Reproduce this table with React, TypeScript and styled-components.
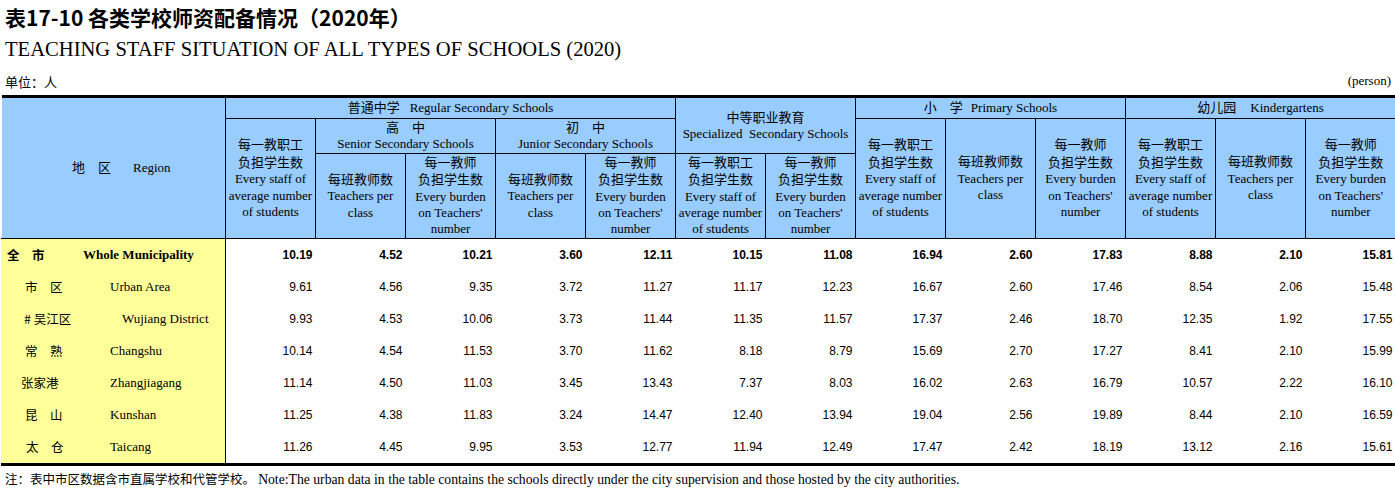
import React from 'react'
import styled, { createGlobalStyle } from 'styled-components'

const GlobalStyle = createGlobalStyle`
  body {
    margin: 0;
    background: #fff;
    color: #000;
  }
`

const CN = `"Noto Sans CJK SC", "Liberation Sans", sans-serif`
const SERIF = `"Liberation Serif", "Noto Sans CJK SC", serif`
const SANS = `"Liberation Sans", Arial, sans-serif`

const Page = styled.div`
  width: 1395px;
  padding-top: 3px;
`

const TitleCn = styled.h1`
  margin: 0 0 0 5px;
  height: 28px;
  line-height: 28px;
  font-family: "Noto Sans CJK SC", sans-serif;
  font-size: 21px;
  font-weight: 700;
`

const TitleEn = styled.h2`
  margin: 0 0 0 5px;
  height: 36px;
  line-height: 36px;
  font-family: ${SERIF};
  font-size: 20.6px;
  font-weight: 400;
`

const UnitRow = styled.div`
  display: flex;
  justify-content: space-between;
  align-items: center;
  height: 28px;
  padding: 0 4px 0 5px;
  font-size: 13px;
`

const Unit = styled.span`
  font-family: ${CN};
`

const Person = styled.span`
  font-family: ${SERIF};
`

const Table = styled.table`
  margin-left: 1px;
  border-collapse: collapse;
  table-layout: fixed;
  width: 1394px;
  border-top: 3px solid #000;
  border-bottom: 3px solid #000;
`

const HeadCell = styled.th<{ $h?: number; $pl?: number }>`
  background: #99ccff;
  border: 1px solid #000;
  border-top: none;
  padding: 0 0 0 ${(p) => p.$pl ?? 0}px;
  height: ${(p) => (p.$h ? `${p.$h}px` : 'auto')};
  font-weight: 400;
  font-size: 13px;
  line-height: 16.4px;
  text-align: center;
  vertical-align: middle;
  white-space: nowrap;
`

const Cn = styled.span`
  font-family: ${CN};
`

const En = styled.span`
  font-family: ${SERIF};
`

const Gap = styled.span<{ $w: number }>`
  display: inline-block;
  width: ${(p) => p.$w}px;
`

const RegionCell = styled.td<{ $bold?: boolean }>`
  background: #ffff99;
  border-right: 1px solid #000;
  border-left: 1px solid #ffff99;
  height: 32px;
  padding: 0;
  font-size: 13px;
  font-weight: ${(p) => (p.$bold ? 700 : 400)};
  white-space: nowrap;
`

const RegionInner = styled.div<{ $en: number }>`
  display: grid;
  grid-template-columns: ${(p) => p.$en}px 1fr;
  align-items: center;
`

const RegionCn = styled.span<{ $x: number }>`
  padding-left: ${(p) => p.$x}px;
  font-family: ${CN};
  font-size: 12.5px;
`

const RegionEn = styled.span`
  font-family: ${SERIF};
`

const NumCell = styled.td<{ $bold?: boolean }>`
  padding: 0 3px 0 0;
  text-align: right;
  font-family: ${SANS};
  font-size: 12px;
  font-weight: ${(p) => (p.$bold ? 700 : 400)};
`

const Note = styled.p`
  margin: 2px 0 0 5px;
  height: 22px;
  line-height: 22px;
  font-size: 12.5px;
`

const NoteEn = styled.span`
  font-family: ${SERIF};
  font-size: 13.7px;
`

type Row = {
  cn: string
  en: string
  cnX: number
  enX: number
  bold?: boolean
  values: string[]
}

const rows: Row[] = [
  { cn: '全　市', en: 'Whole Municipality', cnX: 5, enX: 81, bold: true,
    values: ['10.19', '4.52', '10.21', '3.60', '12.11', '10.15', '11.08', '16.94', '2.60', '17.83', '8.88', '2.10', '15.81'] },
  { cn: '市　区', en: 'Urban Area', cnX: 23, enX: 108,
    values: ['9.61', '4.56', '9.35', '3.72', '11.27', '11.17', '12.23', '16.67', '2.60', '17.46', '8.54', '2.06', '15.48'] },
  { cn: '# 吴江区', en: 'Wujiang District', cnX: 22, enX: 120,
    values: ['9.93', '4.53', '10.06', '3.73', '11.44', '11.35', '11.57', '17.37', '2.46', '18.70', '12.35', '1.92', '17.55'] },
  { cn: '常　熟', en: 'Changshu', cnX: 23, enX: 108,
    values: ['10.14', '4.54', '11.53', '3.70', '11.62', '8.18', '8.79', '15.69', '2.70', '17.27', '8.41', '2.10', '15.99'] },
  { cn: '张家港', en: 'Zhangjiagang', cnX: 19, enX: 108,
    values: ['11.14', '4.50', '11.03', '3.45', '13.43', '7.37', '8.03', '16.02', '2.63', '16.79', '10.57', '2.22', '16.10'] },
  { cn: '昆　山', en: 'Kunshan', cnX: 23, enX: 108,
    values: ['11.25', '4.38', '11.83', '3.24', '14.47', '12.40', '13.94', '19.04', '2.56', '19.89', '8.44', '2.10', '16.59'] },
  { cn: '太　仓', en: 'Taicang', cnX: 24, enX: 108,
    values: ['11.26', '4.45', '9.95', '3.53', '12.77', '11.94', '12.49', '17.47', '2.42', '18.19', '13.12', '2.16', '15.61'] },
]

const StaffLabel = () => (
  <>
    <Cn>每一教职工</Cn>
    <br />
    <Cn>负担学生数</Cn>
    <br />
    <En>Every staff of</En>
    <br />
    <En>average number</En>
    <br />
    <En>of students</En>
  </>
)

const ClassLabel = () => (
  <>
    <Cn>每班教师数</Cn>
    <br />
    <En>Teachers per</En>
    <br />
    <En>class</En>
  </>
)

const BurdenLabel = () => (
  <>
    <Cn>每一教师</Cn>
    <br />
    <Cn>负担学生数</Cn>
    <br />
    <En>Every burden</En>
    <br />
    <En>on Teachers'</En>
    <br />
    <En>number</En>
  </>
)

const App: React.FC = () => {
  return (
    <Page>
      <GlobalStyle />
      <TitleCn>表17-10 各类学校师资配备情况（2020年）</TitleCn>
      <TitleEn>TEACHING STAFF SITUATION OF ALL TYPES OF SCHOOLS (2020)</TitleEn>
      <UnitRow>
        <Unit>单位：人</Unit>
        <Person>(person)</Person>
      </UnitRow>
      <Table>
        <colgroup>
          <col style={{ width: 224 }} />
          {Array.from({ length: 13 }).map((_, i) => (
            <col key={i} style={{ width: 90 }} />
          ))}
        </colgroup>
        <thead>
          <tr>
            <HeadCell rowSpan={3} $pl={16} style={{ borderLeft: 'none' }}>
              <Cn>地　区</Cn>
              <Gap $w={22} />
              <En>Region</En>
            </HeadCell>
            <HeadCell colSpan={5} $h={20}>
              <Cn>普通中学</Cn>
              <Gap $w={10} />
              <En>Regular Secondary Schools</En>
            </HeadCell>
            <HeadCell colSpan={2} rowSpan={2}>
              <Cn>中等职业教育</Cn>
              <br />
              <En>Specialized&nbsp; Secondary Schools</En>
            </HeadCell>
            <HeadCell colSpan={3}>
              <Cn>小　学</Cn>
              <Gap $w={8} />
              <En>Primary Schools</En>
            </HeadCell>
            <HeadCell colSpan={3}>
              <Cn>幼儿园</Cn>
              <Gap $w={14} />
              <En>Kindergartens</En>
            </HeadCell>
          </tr>
          <tr>
            <HeadCell rowSpan={2}>
              <StaffLabel />
            </HeadCell>
            <HeadCell colSpan={2} $h={33}>
              <Cn>高　中</Cn>
              <br />
              <En>Senior Secondary Schools</En>
            </HeadCell>
            <HeadCell colSpan={2}>
              <Cn>初　中</Cn>
              <br />
              <En>Junior Secondary Schools</En>
            </HeadCell>
            <HeadCell rowSpan={2}>
              <StaffLabel />
            </HeadCell>
            <HeadCell rowSpan={2}>
              <ClassLabel />
            </HeadCell>
            <HeadCell rowSpan={2}>
              <BurdenLabel />
            </HeadCell>
            <HeadCell rowSpan={2}>
              <StaffLabel />
            </HeadCell>
            <HeadCell rowSpan={2}>
              <ClassLabel />
            </HeadCell>
            <HeadCell rowSpan={2} style={{ borderRight: 'none' }}>
              <BurdenLabel />
            </HeadCell>
          </tr>
          <tr>
            <HeadCell $h={82}>
              <ClassLabel />
            </HeadCell>
            <HeadCell>
              <BurdenLabel />
            </HeadCell>
            <HeadCell>
              <ClassLabel />
            </HeadCell>
            <HeadCell>
              <BurdenLabel />
            </HeadCell>
            <HeadCell>
              <StaffLabel />
            </HeadCell>
            <HeadCell>
              <BurdenLabel />
            </HeadCell>
          </tr>
        </thead>
        <tbody>
          {rows.map((r) => (
            <tr key={r.en}>
              <RegionCell $bold={r.bold}>
                <RegionInner $en={r.enX}>
                  <RegionCn $x={r.cnX}>{r.cn}</RegionCn>
                  <RegionEn>{r.en}</RegionEn>
                </RegionInner>
              </RegionCell>
              {r.values.map((v, i) => (
                <NumCell key={i} $bold={r.bold}>
                  {v}
                </NumCell>
              ))}
            </tr>
          ))}
        </tbody>
      </Table>
      <Note>
        <Cn>注：表中市区数据含市直属学校和代管学校。</Cn>{' '}
        <NoteEn>
          Note:The urban data in the table contains the schools directly under the city supervision and
          those hosted by the city authorities.
        </NoteEn>
      </Note>
    </Page>
  )
}

export default App
